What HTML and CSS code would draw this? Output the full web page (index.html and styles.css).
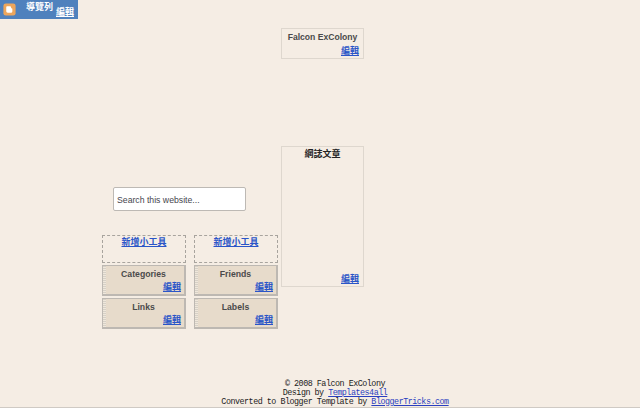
FILE: index.html
```html
<!DOCTYPE html>
<html lang="zh-Hant">
<head>
<meta charset="utf-8">
<title>Falcon ExColony</title>
<link rel="stylesheet" href="styles.css">
</head>
<body>
<header class="navbar">
  <svg class="logo" width="13" height="13" viewBox="0 0 16 16"><rect x="0.5" y="0.5" width="15" height="15" rx="3" fill="#eda65c"/><path d="M5 4h3.500c1 0 1.500 .8 1.500 1.800v.7h.6c.6 0 .9 .4 .9 .9V10c0 1.200-.9 2-2 2H5.800c-1.100 0-1.800-.8-1.800-1.800V5c0-.6 .4-1 1-1z" fill="#fff"/></svg>
  <span class="nav-title">導覽列</span>
  <a class="nav-edit" href="#">編輯</a>
</header>
<main class="layout">
  <div class="left">
    <div class="search">Search this website...</div>
    <div class="widgets">
      <div class="add"><a href="#">新增小工具</a></div>
      <div class="add"><a href="#">新增小工具</a></div>
      <div class="tan"><h2>Categories</h2><a class="edit" href="#">編輯</a></div>
      <div class="tan"><h2>Friends</h2><a class="edit" href="#">編輯</a></div>
      <div class="tan"><h2>Links</h2><a class="edit" href="#">編輯</a></div>
      <div class="tan"><h2>Labels</h2><a class="edit" href="#">編輯</a></div>
    </div>
  </div>
  <div class="right">
    <section class="box head-box"><h1>Falcon ExColony</h1><a class="edit" href="#">編輯</a></section>
    <section class="box blog-box"><h2 class="blog-title">網誌文章</h2><a class="edit" href="#">編輯</a></section>
  </div>
</main>
<footer class="footer">
  <div>© 2008 Falcon ExColony</div>
  <div>Design by <a href="#">Templates4all</a></div>
  <div>Converted to Blogger Template by <a href="#">BloggerTricks.com</a></div>
</footer>
</body>
</html>
```
FILE: styles.css
```css
html, body { margin: 0; padding: 0; }
body {
  width: 640px;
  height: 408px;
  overflow: hidden;
  background: #f5ede4;
  box-shadow: inset 0 -1px #cfcac4;
  font-family: "Liberation Sans", "Noto Sans CJK TC", sans-serif;
}
a { color: #2a55c8; font-weight: bold; }
.navbar {
  width: 78px;
  height: 19px;
  background: #4f81bd;
  display: flex;
  align-items: flex-start;
  color: #fff;
  font-family: "Liberation Serif", "Noto Sans CJK TC", serif;
  font-size: 9px;
  line-height: 11px;
  font-weight: bold;
}
.logo { margin: 3px 0 0 3px; flex: none; }
.nav-title { margin: 2px 0 0 10px; width: 30px; white-space: nowrap; }
.nav-edit { color: #fff; margin: 7px 0 0 0; text-decoration: underline; white-space: nowrap; }
.layout {
  display: flex;
  align-items: flex-start;
  padding-left: 102px;
  height: 310px;
}
.left { width: 176px; margin-top: 168px; }
.search {
  margin-left: 11px;
  width: 131px;
  height: 22px;
  background: #fff;
  border: 1px solid #bdb9b4;
  border-radius: 2px;
  font-size: 8.700px;
  line-height: 25px;
  color: #46464e;
  text-indent: 3px;
}
.widgets {
  display: grid;
  grid-template-columns: 84px 84px;
  grid-template-rows: 28px 31px 31px;
  column-gap: 8px;
  row-gap: 2px;
  margin-top: 24px;
}
.add {
  border: 1px dashed #a8a49e;
  box-sizing: border-box;
  text-align: center;
  font-family: "Liberation Serif", "Noto Sans CJK TC", serif;
  font-size: 9px;
  line-height: 12px;
}
.tan {
  background: repeating-linear-gradient(#d6d0c6 0 1px, #efe7db 1px 2px) left / 3px 100% no-repeat, #e7dbcb;
  border: 1px solid #bdb8b2;
  border-width: 1px 2px 2px 1px;
  box-sizing: border-box;
  text-align: center;
}
.tan h2 {
  margin: 3px 0 0;
  font-size: 8.700px;
  line-height: 11px;
  color: #4a4a4a;
  font-weight: bold;
}
.edit {
  display: block;
  text-align: right;
  font-size: 9px;
  line-height: 12px;
  font-family: "Liberation Serif", "Noto Sans CJK TC", serif;
}
.tan .edit { margin: 1px 3px 0 0; }
.right { width: 83px; margin: 9px 0 0 3px; }
.box {
  border: 1px solid #ded7ce;
  box-sizing: border-box;
  width: 83px;
}
.head-box { height: 31px; }
.head-box h1 {
  margin: 3px 0 0;
  font-size: 8.600px;
  line-height: 11px;
  text-align: center;
  color: #4a4a4a;
}
.head-box .edit { margin: 2px 4px 0 0; }
.blog-box {
  height: 141px;
  margin-top: 87px;
  display: flex;
  flex-direction: column;
  justify-content: space-between;
  color: #222;
}
.blog-title {
  margin: 2px 0 0;
  font-size: 9px;
  line-height: 11px;
  text-align: center;
}
.blog-box .edit { margin: 0 4px 1px 0; }
.footer {
  margin-top: 51px;
  padding-left: 30px;
  text-align: center;
  font-family: "Liberation Mono", "Noto Sans CJK TC", monospace;
  font-size: 8.400px;
  letter-spacing: -0.480px;
  line-height: 9px;
  color: #222;
}
.footer a { color: #2a3fc0; font-weight: normal; }
```
